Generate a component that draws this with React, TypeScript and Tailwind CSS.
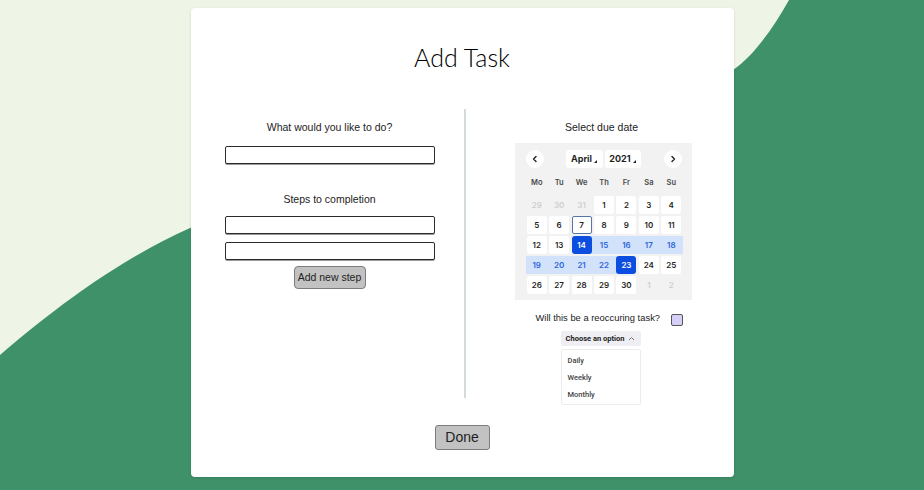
import React from 'react';

type Day = { n: number; kind: 'muted' | 'normal' | 'today' | 'selected' | 'range' };

const weeks: Day[][] = [
  [
    { n: 29, kind: 'muted' },
    { n: 30, kind: 'muted' },
    { n: 31, kind: 'muted' },
    { n: 1, kind: 'normal' },
    { n: 2, kind: 'normal' },
    { n: 3, kind: 'normal' },
    { n: 4, kind: 'normal' },
  ],
  [5, 6, 7, 8, 9, 10, 11].map((n) => ({ n, kind: n === 7 ? 'today' : 'normal' }) as Day),
  [12, 13, 14, 15, 16, 17, 18].map(
    (n) => ({ n, kind: n === 14 ? 'selected' : n > 14 ? 'range' : 'normal' }) as Day,
  ),
  [19, 20, 21, 22, 23, 24, 25].map(
    (n) => ({ n, kind: n === 23 ? 'selected' : n < 23 ? 'range' : 'normal' }) as Day,
  ),
  [
    { n: 26, kind: 'normal' },
    { n: 27, kind: 'normal' },
    { n: 28, kind: 'normal' },
    { n: 29, kind: 'normal' },
    { n: 30, kind: 'normal' },
    { n: 1, kind: 'muted' },
    { n: 2, kind: 'muted' },
  ],
];

const weekdays = ['Mo', 'Tu', 'We', 'Th', 'Fr', 'Sa', 'Su'];

const Caret = () => (
  <svg width="3" height="3" viewBox="0 0 3 3" className="ml-[2px] mt-[5px]">
    <path d="M3 0 L3 3 L0 3 Z" fill="#222" />
  </svg>
);

const Chevron = ({ dir }: { dir: 'left' | 'right' }) => (
  <svg width="8" height="8" viewBox="0 0 8 8">
    <path
      d={dir === 'left' ? 'M5 1.5 L2.5 4 L5 6.5' : 'M3 1.5 L5.5 4 L3 6.5'}
      fill="none"
      stroke="#222"
      strokeWidth="1.4"
      strokeLinecap="round"
      strokeLinejoin="round"
    />
  </svg>
);

const DayCell = ({ day }: { day: Day }) => {
  const inRange = day.kind === 'range' || day.kind === 'selected';
  let rangeBg = '';
  if (inRange) {
    if (day.kind === 'selected' && day.n === 14) rangeBg = 'bg-[linear-gradient(to_right,transparent_50%,#d3e2fb_50%)]';
    else if (day.kind === 'selected' && day.n === 23) rangeBg = 'bg-[linear-gradient(to_right,#d3e2fb_50%,transparent_50%)]';
    else rangeBg = 'bg-[#d3e2fb]';
  }
  const box =
    day.kind === 'muted'
      ? 'text-[#cfcfcf]'
      : day.kind === 'normal'
        ? 'bg-white text-[#1f1f1f]'
        : day.kind === 'today'
          ? 'bg-white text-[#1f1f1f] border border-[#5577a8]'
          : day.kind === 'selected'
            ? 'bg-[#0b4ee0] text-white rounded-[3px]'
            : 'text-[#2d67dc]';
  return (
    <div className={`h-[18px] flex items-center justify-center ${rangeBg}`}>
      <div className={`w-[20px] h-[18px] flex items-center justify-center rounded-[2px] text-[8px] font-semibold ${box}`}>
        {day.n}
      </div>
    </div>
  );
};

const Calendar = () => (
  <div className="w-[177px] h-[157px] bg-[#f2f2f2] pt-[7px] pl-[11px] pr-[9px]" style={{ fontFamily: 'Inter, "Noto Sans", sans-serif' }}>
    <div className="flex items-center h-[18px]">
      <div className="w-[18px] h-[18px] rounded-full bg-white flex items-center justify-center">
        <Chevron dir="left" />
      </div>
      <div className="ml-[22px] flex gap-[2px]">
        <div className="w-[37px] h-[18px] bg-white rounded-[3px] flex items-center justify-center text-[9px] font-bold text-[#1f1f1f]">
          April
          <Caret />
        </div>
        <div className="w-[36px] h-[18px] bg-white rounded-[3px] flex items-center justify-center text-[9px] font-bold text-[#1f1f1f]">
          2021
          <Caret />
        </div>
      </div>
      <div className="ml-auto mr-[1px] w-[18px] h-[18px] rounded-full bg-white flex items-center justify-center">
        <Chevron dir="right" />
      </div>
    </div>
    <div className="grid grid-cols-7 mt-[9px] h-[12px] items-center">
      {weekdays.map((w) => (
        <div key={w} className="text-center text-[7.5px] font-semibold text-[#4a4a4a]">
          {w}
        </div>
      ))}
    </div>
    <div className="grid grid-cols-7 gap-y-[2px] mt-[7px]">
      {weeks.map((week, wi) => week.map((d, di) => <DayCell key={`${wi}-${di}`} day={d} />))}
    </div>
  </div>
);

const TextBox = () => (
  <div className="w-[210px] h-[18px] border border-[#2b2b2b] rounded-[2px] bg-white shadow-[0_1px_0_#9a9a9a]" />
);

export default function App() {
  return (
    <div className="relative w-full h-[490px] overflow-hidden bg-[#eef5e7]" style={{ fontFamily: '"Liberation Sans", Arial, sans-serif' }}>
      <svg className="absolute inset-0" width="924" height="490" viewBox="0 0 924 490">
        <path
          d="M0 355 C70 295 130 255 190 228 C350 155 650 120 733 70 C755 55 775 25 789 0 L924 0 L924 490 L0 490 Z"
          fill="#3f916a"
        />
      </svg>
      <div className="relative mx-auto mt-[8px] w-[543px] h-[469px] bg-white rounded-[4px] shadow-[0_1px_3px_rgba(0,0,0,0.12)] flex flex-col items-center pt-[32px]">
        <h1 className="text-[25px] leading-[34px] font-light text-black" style={{ fontFamily: 'Lato, "Noto Sans", sans-serif' }}>
          Add Task
        </h1>
        <div className="mt-[35px] flex w-full h-[289px]">
          <div className="w-[273px] flex flex-col items-center pt-[11px] pl-[5px]">
            <p className="text-[10.5px] leading-[14px] text-[#222]">What would you like to do?</p>
            <div className="mt-[12px]">
              <TextBox />
            </div>
            <p className="mt-[28px] text-[10.5px] leading-[14px] text-[#222]">Steps to completion</p>
            <div className="mt-[10px] flex flex-col gap-[8px]">
              <TextBox />
              <TextBox />
            </div>
            <button className="mt-[6px] w-[72px] h-[23px] bg-[#c2c2c2] border border-[#7c7c7c] rounded-[4px] text-[10.5px] text-[#1f1f1f]">
              Add new step
            </button>
          </div>
          <div className="w-[2px] h-[289px] bg-[#d3dbdd]" />
          <div className="flex-1 flex flex-col pt-[11px]">
            <p className="text-[10.5px] leading-[14px] text-[#222] text-center pl-[4px]">Select due date</p>
            <div className="mt-[9px] ml-[49px]">
              <Calendar />
            </div>
            <div className="mt-[11px] h-[14px] flex items-center ml-[70px]">
              <span className="text-[9.4px] text-[#222]">Will this be a reoccuring task?</span>
              <div className="ml-[11px] mt-[4px] w-[12px] h-[12px] rounded-[2px] border border-[#555] bg-[#d5d0f6]" />
            </div>
            <div className="ml-[95px] mt-[6px] w-[80px]" style={{ fontFamily: 'Roboto, "Noto Sans", sans-serif' }}>
              <div className="h-[15px] bg-[#eeeef3] rounded-[2px] flex items-center justify-center gap-[4px] text-[7.5px] font-bold text-[#222]">
                Choose an option
                <svg width="7" height="5" viewBox="0 0 7 5">
                  <path d="M1 4 L3.5 1.5 L6 4" fill="none" stroke="#555" strokeWidth="0.8" />
                </svg>
              </div>
              <div className="mt-[3px] h-[56px] bg-white border border-[#ececec] rounded-[2px] pt-[2px] flex flex-col text-[7.5px] font-medium text-[#444]">
                <div className="h-[17px] flex items-center pl-[6px]">Daily</div>
                <div className="h-[17px] flex items-center pl-[6px]">Weekly</div>
                <div className="h-[17px] flex items-center pl-[6px]">Monthly</div>
              </div>
            </div>
          </div>
        </div>
        <button className="mt-[27px] w-[55px] h-[25px] bg-[#c2c2c2] border border-[#7c7c7c] rounded-[3px] text-[14px] text-[#1f1f1f]">
          Done
        </button>
      </div>
    </div>
  );
}
